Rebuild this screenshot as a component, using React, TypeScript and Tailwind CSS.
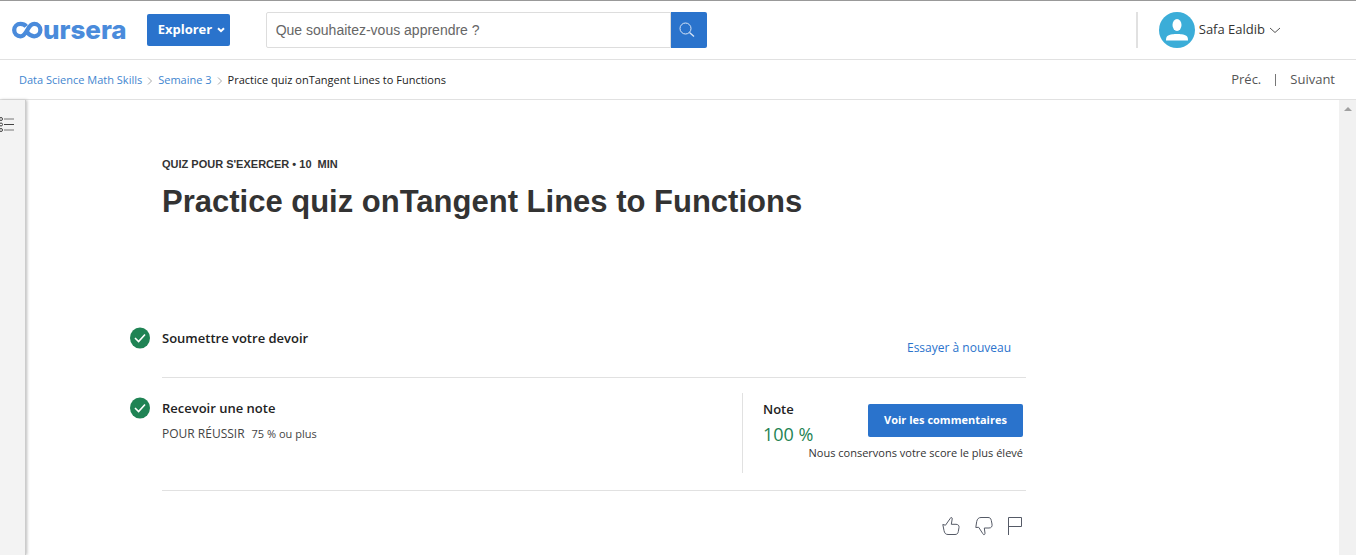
import React from 'react';

function CourseraLogo() {
  return (
    <a href="#home" aria-label="Coursera" className="flex h-8 items-center text-[#4a8bdb]">
      <svg width="32" height="18" viewBox="0 0 32 18" fill="none" stroke="currentColor" strokeWidth="4.3" aria-hidden="true">
        <path d="M15.2 5.4C13.800 3.600 11.500 2.900 9.400 2.900A6.200 6.200 0 0 0 9.400 15.300C16.400 15.300 16 2.900 23.200 2.900A6.200 6.200 0 0 1 23.200 15.300C20.600 15.300 18.200 14 16.400 11.400" />
      </svg>
      <span className="font-['Inter',sans-serif] text-[26px] leading-8 font-extrabold">ursera</span>
    </a>
  );
}

function Header() {
  return (
    <header className="flex h-[60px] items-center border-t border-b border-t-[#999] border-b-[#e1e1e1] pl-[11px]">
      <CourseraLogo />
      <button type="button" className="ml-5 flex h-8 w-[83px] shrink-0 items-center justify-between rounded-xs bg-[#2a73cc] pr-1 pl-[11px] text-[13px] font-bold text-white">
        Explorer
        <svg width="10" height="8" viewBox="0 0 10 8" fill="none" stroke="currentColor" strokeWidth="2" aria-hidden="true">
          <path d="M2 2.2 5 5.2 8 2.2" />
        </svg>
      </button>
      <form className="ml-9 flex h-9 w-[441px]" onSubmit={(e) => e.preventDefault()}>
        <input
          type="search"
          aria-label="Rechercher"
          placeholder="Que souhaitez-vous apprendre ?"
          className="min-w-0 flex-1 rounded-l-xs border border-[#ddd] px-[9px] font-['Liberation_Sans',sans-serif] text-[14px] outline-none placeholder:text-[#666]"
        />
        <button type="submit" aria-label="Rechercher" className="flex w-9 items-center justify-center rounded-r-xs bg-[#2a73cc] pr-1 text-[#d9e6f7]">
          <svg width="16" height="16" viewBox="0 0 16 16" fill="none" stroke="currentColor" aria-hidden="true">
            <circle cx="6.5" cy="6.5" r="5.5" />
            <path d="m10.5 10.5 4.5 4" strokeWidth="1.3" />
          </svg>
        </button>
      </form>
      <div className="mr-[75px] ml-auto flex h-9 items-center border-l-2 border-[#e1e1e1] pl-[21px]">
        <button type="button" className="flex items-center gap-1 text-[13px] text-[#333]">
          <svg width="36" height="36" viewBox="0 0 36 36" aria-hidden="true">
            <circle cx="18" cy="18" r="18" fill="#3badd8" />
            <ellipse cx="18" cy="13" rx="4.5" ry="6" fill="#fff" />
            <path d="M7 28.5C7 24 8.500 23 13.500 22.200C15.500 21.900 20.500 21.900 22.500 22.200C27.500 23 29 24 29 28.500Z" fill="#fff" />
          </svg>
          Safa Ealdib
          <svg width="12" height="8" viewBox="0 0 12 8" fill="none" stroke="#555" aria-hidden="true">
            <path d="M1 2 6 6.500 11 2" />
          </svg>
        </button>
      </div>
    </header>
  );
}

function Separator() {
  return (
    <svg width="6" height="8" viewBox="0 0 6 8" fill="none" stroke="#aaa" aria-hidden="true">
      <path d="M1 .5 4.500 4 1 7.500" />
    </svg>
  );
}

function SubHeader() {
  return (
    <div className="flex h-10 items-center justify-between border-b border-[#e1e1e1] pr-[21px] pl-[19px]">
      <nav aria-label="Fil d'Ariane" className="flex items-center gap-[5px] pt-[2px] text-[11px] text-[#3f86cf]">
        <a href="#course">Data Science Math Skills</a>
        <Separator />
        <a href="#week">Semaine 3</a>
        <Separator />
        <span className="text-[#222]">Practice quiz onTangent Lines to Functions</span>
      </nav>
      <nav aria-label="Navigation" className="flex items-center text-[13px] text-[#555]">
        <a href="#prev">Préc.</a>
        <span className="mx-[14px] h-3 w-px bg-[#777]" />
        <a href="#next">Suivant</a>
      </nav>
    </div>
  );
}

function Check() {
  return (
    <svg width="20" height="22" viewBox="0 0 20 22" className="shrink-0" aria-hidden="true">
      <ellipse cx="10" cy="11" rx="10" ry="10.5" fill="#1f8354" />
      <path d="m5 11 3.600 3.500L15 7.500" fill="none" stroke="#fff" strokeWidth="1.600" />
    </svg>
  );
}

function Quiz() {
  return (
    <main className="min-w-0 flex-1 pt-14 pl-[104px]">
      <div className="max-w-[896px]">
        <div className="pl-8 font-['Liberation_Sans',sans-serif] font-bold text-[#333]">
          <p className="text-[11px] leading-4 whitespace-pre">QUIZ POUR S'EXERCER • 10  MIN</p>
          <h1 className="mt-2 text-[31px] leading-11">Practice quiz onTangent Lines to Functions</h1>
        </div>

        <section className="mt-[103px] flex gap-3">
          <Check />
          <div className="flex h-[51px] flex-1 justify-between border-b border-[#e1e1e1]">
            <h2 className="text-[13px] leading-[22px] font-semibold text-[#222]">Soumettre votre devoir</h2>
            <a href="#retry" className="mt-[11px] mr-[15px] text-[12px] leading-5 font-medium text-[#2a73cc]">Essayer à nouveau</a>
          </div>
        </section>

        <section className="mt-[15px] flex gap-3">
          <div className="pt-1"><Check /></div>
          <div className="flex h-[98px] flex-1 justify-between border-b border-[#e1e1e1]">
            <div className="pt-1">
              <h2 className="text-[13px] leading-[22px] font-semibold text-[#222]">Recevoir une note</h2>
              <p className="mt-[6px] text-[11px] leading-[18px] text-[#444]">
                <span className="mr-[7px] text-[12px] font-medium">POUR RÉUSSIR</span>
                75 % ou plus
              </p>
            </div>
            <div className="flex h-20 w-[284px] border-l border-[#e1e1e1] pr-[3px] pl-5">
              <div className="w-[50px] shrink-0 pt-[5px]">
                <h3 className="text-[13px] leading-[22px] font-semibold text-[#222]">Note</h3>
                <p className="text-[18px] leading-[28px] whitespace-nowrap text-[#1f8354]">100 %</p>
              </div>
              <div className="flex min-w-0 flex-1 flex-col items-end pt-[11px]">
                <button type="button" className="h-[33px] w-[155px] rounded-xs bg-[#2a73cc] text-[11px] font-bold text-white">Voir les commentaires</button>
                <p className="mt-[7px] text-[11px] leading-[18px] whitespace-nowrap text-[#333]">Nous conservons votre score le plus élevé</p>
              </div>
            </div>
          </div>
        </section>

        <div className="mt-[25px] flex justify-end gap-[15px] pr-1 text-[#555a66]">
          <button type="button" aria-label="J'aime">
            <svg width="18" height="20" viewBox="0 0 18 20" fill="none" stroke="currentColor" aria-hidden="true">
              <path d="M.8 8.500 3.500 9.200 8.200 2.500C8.600 1 10.500 1.200 10.200 3L9.300 8.300H14C16 8.300 17.300 9.500 17 11.500L16.300 15.500C16 17.500 15 18.500 13 18.500H6C3.500 18.500 2.500 17 2 14.500Z" />
            </svg>
          </button>
          <button type="button" aria-label="Je n'aime pas">
            <svg width="18" height="20" viewBox="0 0 18 20" fill="none" stroke="currentColor" aria-hidden="true">
              <path d="M.8 11.500 3.700 11.300 7.700 17.500C8.200 19.200 10.300 19 10 17.200L9.300 12H14C16.300 12 17.500 10.500 17 8L16.300 4.500C15.800 2.300 15 1.500 13 1.500H6C3.500 1.500 2.300 3 1.700 5.500Z" />
            </svg>
          </button>
          <button type="button" aria-label="Signaler">
            <svg width="14" height="20" viewBox="0 0 14 20" fill="none" stroke="currentColor" aria-hidden="true">
              <path d="M.5 19V1.500H13.500V10.500H.5" />
            </svg>
          </button>
        </div>
      </div>
    </main>
  );
}

export default function App() {
  return (
    <div className="flex min-h-screen flex-col bg-white font-['Open_Sans',sans-serif]">
      <Header />
      <SubHeader />
      <div className="flex flex-1">
        <aside className="w-[26px] shrink-0 border-r border-[#ccc] bg-[#f3f3f3] pt-4 shadow-[1px_0_3px_#bbb]">
          <button type="button" aria-label="Ouvrir le menu" className="block">
            <svg width="15" height="17" viewBox="0 0 15 17" fill="none" stroke="#444" aria-hidden="true">
              <circle cx="1" cy="3" r="1.500" />
              <circle cx="1" cy="8.500" r="1.500" />
              <circle cx="1" cy="14" r="1.500" />
              <path d="M4 3H14M4 14H14" stroke="#777" />
              <path d="M4 8.500H14" />
            </svg>
          </button>
        </aside>
        <Quiz />
        <div className="flex w-[17px] shrink-0 justify-center bg-[#f1f1f1] pt-[7px]" aria-hidden="true">
          <svg width="8" height="4" viewBox="0 0 8 4">
            <path d="M0 4 4 0 8 4Z" fill="#a0a0a0" />
          </svg>
        </div>
      </div>
    </div>
  );
}
